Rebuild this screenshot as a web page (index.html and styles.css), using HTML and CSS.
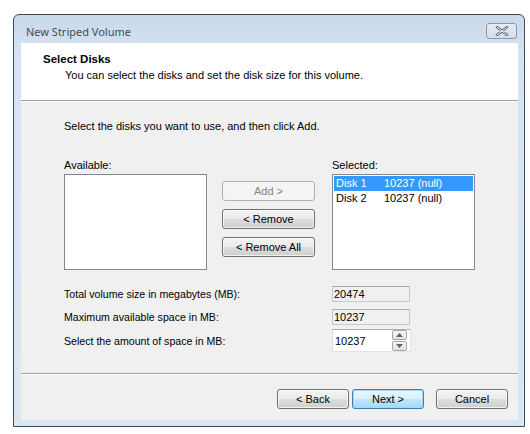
FILE: index.html
```html
<!DOCTYPE html>
<html>
<head>
<meta charset="utf-8">
<link rel="stylesheet" href="styles.css">
</head>
<body>
<div class="window">
  <div class="titlebar">
    <span class="title">New Striped Volume</span>
    <div class="close">
      <svg width="14" height="10" viewBox="0 0 14 10"><path d="M2 1 L12 9 M12 1 L2 9" stroke="#5a6470" stroke-width="2.6" stroke-linecap="round"/><path d="M2 1 L12 9 M12 1 L2 9" stroke="#ffffff" stroke-width="1" stroke-linecap="round"/></svg>
    </div>
  </div>
  <div class="client">
    <div class="header">
      <div class="h-title">Select Disks</div>
      <div class="h-sub">You can select the disks and set the disk size for this volume.</div>
    </div>
    <div class="body">
      <div class="intro">Select the disks you want to use, and then click Add.</div>
      <div class="lists">
        <div class="col">
          <div class="lbl">Available:</div>
          <div class="listbox"></div>
        </div>
        <div class="btncol">
          <div class="btn disabled">Add &gt;</div>
          <div class="btn">&lt; Remove</div>
          <div class="btn">&lt; Remove All</div>
        </div>
        <div class="col">
          <div class="lbl">Selected:</div>
          <div class="listbox">
            <div class="item sel"><span class="c1">Disk 1</span><span>10237 (null)</span></div>
            <div class="item"><span class="c1">Disk 2</span><span>10237 (null)</span></div>
          </div>
        </div>
      </div>
      <div class="fields">
        <div class="frow r1">
          <div class="flabel">Total volume size in megabytes (MB):</div>
          <div class="ro">20474</div>
        </div>
        <div class="frow r2">
          <div class="flabel">Maximum available space in MB:</div>
          <div class="ro">10237</div>
        </div>
        <div class="frow r3">
          <div class="flabel">Select the amount of space in MB:</div>
          <div class="spin">
            <span class="spinval">10237</span>
            <div class="arrows">
              <div class="arr"><svg width="7" height="4" viewBox="0 0 7 4"><path d="M0 4 L3.5 0 L7 4Z" fill="#5c6670"/></svg></div>
              <div class="arr"><svg width="7" height="4" viewBox="0 0 7 4"><path d="M0 0 L3.5 4 L7 0Z" fill="#5c6670"/></svg></div>
            </div>
          </div>
        </div>
      </div>
    </div>
    <div class="footer">
      <div class="btn fbtn">&lt; Back</div>
      <div class="btn fbtn default">Next &gt;</div>
      <div class="btn fbtn cancel">Cancel</div>
    </div>
  </div>
</div>
</body>
</html>
```
FILE: styles.css
```css
html, body {
  margin: 0;
  padding: 0;
  background: #ffffff;
}
body {
  font-family: "Liberation Sans", Arial, sans-serif;
  font-size: 11px;
  color: #000;
}
.window {
  margin: 14px 0 0 13px;
  width: 510px;
  height: 411px;
  border: 1px solid #434a55;
  border-radius: 6px 6px 0 0;
  background: linear-gradient(#c9d8ea, #d6e3f2 40px, #dbe6f4);
  display: flex;
  flex-direction: column;
}
.titlebar {
  height: 28px;
  display: flex;
  align-items: center;
  justify-content: space-between;
  padding: 0 7px 0 12px;
}
.title {
  font-family: "Noto Sans", "Open Sans", sans-serif;
  font-size: 11px;
  color: #3f4d60;
  margin-top: 5px;
}
.close {
  width: 29px;
  height: 14px;
  border: 1px solid #8d98a6;
  border-radius: 3px;
  background: linear-gradient(#e6edf5, #d3dde9);
  display: flex;
  align-items: center;
  justify-content: center;
  margin-top: 4px;
}
.client {
  margin: 0 6px 6px 7px;
  flex: 1;
  background: #f0f0f0;
  display: flex;
  flex-direction: column;
}
.header {
  background: #fff;
  height: 58px;
  border-bottom: 1px solid #a0a0a0;
  box-sizing: border-box;
  padding: 9px 0 0 22px;
}
.h-title {
  font-weight: bold;
  font-size: 11.5px;
  line-height: 14px;
}
.h-sub {
  padding-left: 22px;
  line-height: 15px;
  margin-top: 2px;
}
.body {
  flex: 1;
  border-top: 1px solid #fff;
  padding: 0 0 0 43px;
  border-bottom: 1px solid #a0a0a0;
}
.intro {
  margin-top: 17px;
  line-height: 14px;
}
.lists {
  display: flex;
  margin-top: 25px;
}
.col {
  display: flex;
  flex-direction: column;
}
.lbl {
  line-height: 14px;
  margin-bottom: 2px;
}
.listbox {
  width: 141px;
  height: 93px;
  border: 1px solid #828790;
  background: #fff;
  padding: 1px 0 0 0;
}
.item {
  display: flex;
  height: 15px;
  line-height: 15px;
  padding-left: 2px;
  margin: 0 1px;
}
.item.sel {
  background: #3399ff;
  color: #fff;
}
.c1 {
  width: 48px;
}
.btncol {
  display: flex;
  flex-direction: column;
  gap: 8px;
  margin: 23px 17px 0 15px;
}
.btn {
  width: 91px;
  height: 18px;
  border: 1px solid #707070;
  border-radius: 3px;
  background: linear-gradient(#f2f2f2, #ebebeb 50%, #dddddd 50%, #cfcfcf);
  display: flex;
  align-items: center;
  justify-content: center;
  line-height: 14px;
  box-shadow: inset 0 0 0 1px rgba(255,255,255,0.7);
}
.btn.disabled {
  border-color: #adb2b5;
  background: #f4f4f4;
  color: #838383;
  box-shadow: none;
}
.fields {
  display: flex;
  flex-direction: column;
  margin-top: 16px;
}
.frow {
  display: flex;
  align-items: center;
}
.r2 {
  margin-top: 7px;
}
.r3 {
  margin-top: 4px;
}
.flabel {
  width: 268px;
  font-size: 10.6px;
  line-height: 14px;
}
.ro {
  width: 75px;
  height: 14px;
  border: 1px solid #c8c8c8;
  border-top-color: #a9a9a9;
  background: #f0f0f0;
  line-height: 14px;
  padding-left: 1px;
}
.spin {
  width: 77px;
  height: 21px;
  border: 1px solid #e3e3e3;
  border-top-color: #abadb3;
  border-left-color: #dadada;
  background: #fff;
  display: flex;
  align-items: center;
  justify-content: space-between;
}
.spinval {
  padding-left: 2px;
}
.arrows {
  display: flex;
  flex-direction: column;
  gap: 1px;
  margin-right: 3px;
}
.arr {
  width: 13px;
  height: 8px;
  border: 1px solid #a4a8ad;
  border-radius: 2px;
  background: linear-gradient(#f6f6f6, #e2e2e2);
  display: flex;
  align-items: center;
  justify-content: center;
}
.footer {
  height: 46px;
  border-top: 1px solid #fff;
  display: flex;
  align-items: flex-start;
  justify-content: flex-end;
  padding: 14px 10px 0 0;
  box-sizing: border-box;
}
.fbtn {
  width: 70px;
  height: 18px;
}
.fbtn.default {
  margin-left: 3px;
  border-color: #3c7fb1;
  background: linear-gradient(#eaf6fd, #d9f0fc 50%, #bee6fd 50%, #a7d9f5);
  box-shadow: inset 0 0 0 1px #a6d6f2;
}
.fbtn.cancel {
  margin-left: 12px;
}
```
